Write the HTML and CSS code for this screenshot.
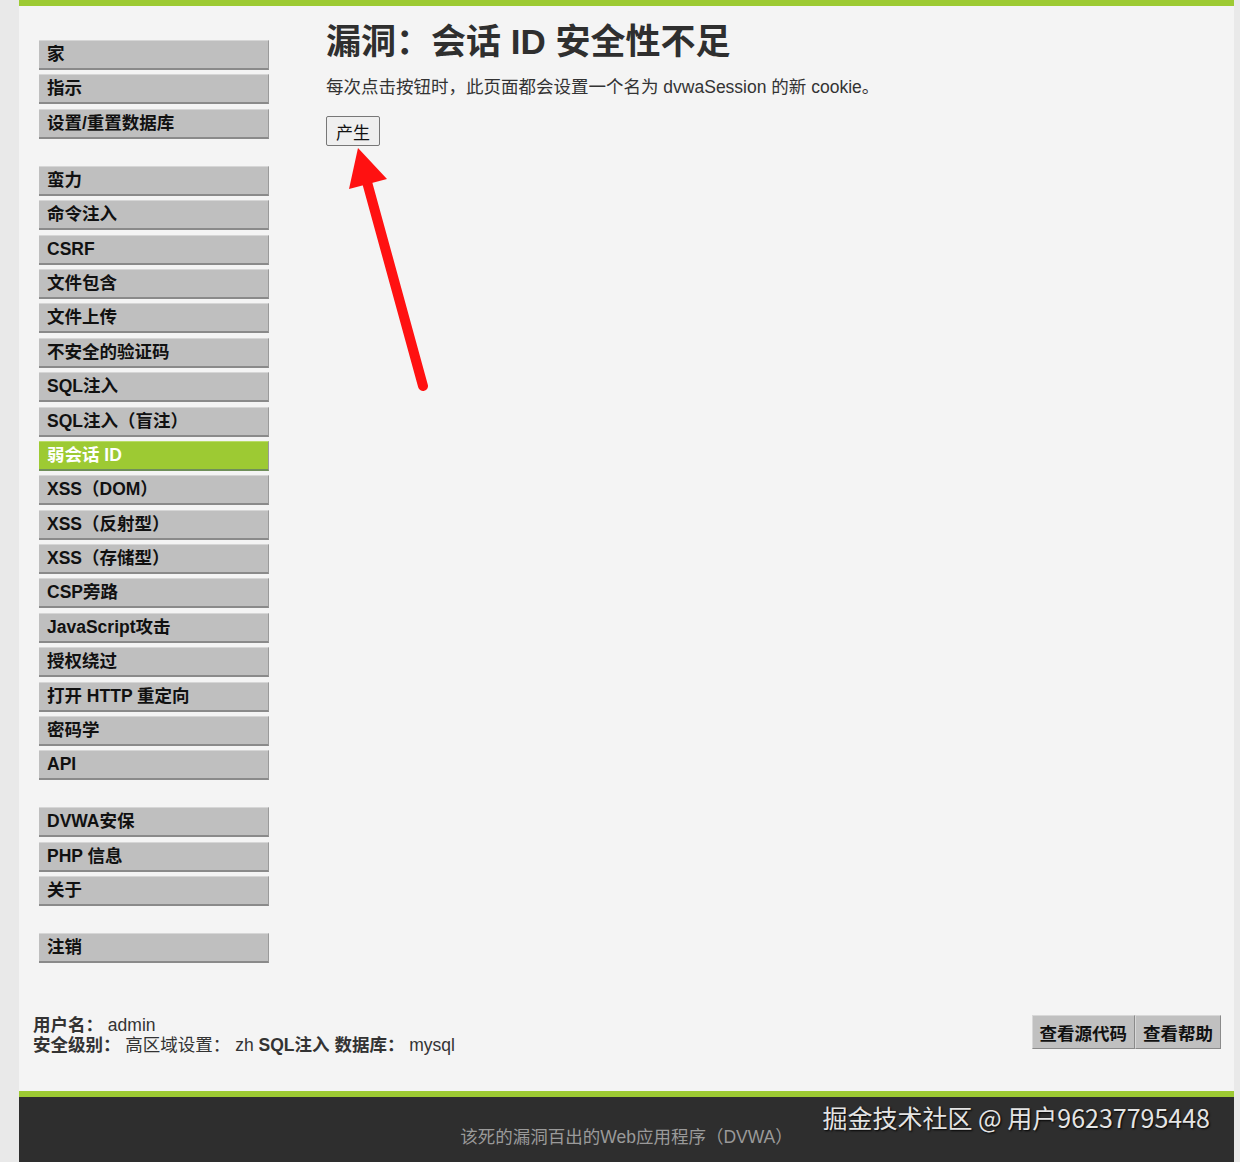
FILE: index.html
```html
<!DOCTYPE html>
<html lang="zh">
<head>
<meta charset="UTF-8">
<meta name="viewport" content="width=device-width, initial-scale=1.0">
<title>漏洞：会话 ID 安全性不足</title>
<link rel="stylesheet" href="styles.css">
</head>
<body>
<div id="container">
  <div id="header"></div>

  <div id="main_body">
    <div id="main_menu">
      <ul class="menuBlocks">
        <li><a href="#">家</a></li>
        <li><a href="#">指示</a></li>
        <li><a href="#">设置/重置数据库</a></li>
      </ul>
      <ul class="menuBlocks">
        <li><a href="#">蛮力</a></li>
        <li><a href="#">命令注入</a></li>
        <li><a href="#">CSRF</a></li>
        <li><a href="#">文件包含</a></li>
        <li><a href="#">文件上传</a></li>
        <li><a href="#">不安全的验证码</a></li>
        <li><a href="#">SQL注入</a></li>
        <li><a href="#">SQL注入（盲注）</a></li>
        <li class="selected"><a href="#">弱会话 ID</a></li>
        <li><a href="#">XSS（DOM）</a></li>
        <li><a href="#">XSS（反射型）</a></li>
        <li><a href="#">XSS（存储型）</a></li>
        <li><a href="#">CSP旁路</a></li>
        <li><a href="#">JavaScript攻击</a></li>
        <li><a href="#">授权绕过</a></li>
        <li><a href="#">打开 HTTP 重定向</a></li>
        <li><a href="#">密码学</a></li>
        <li><a href="#">API</a></li>
      </ul>
      <ul class="menuBlocks">
        <li><a href="#">DVWA安保</a></li>
        <li><a href="#">PHP 信息</a></li>
        <li><a href="#">关于</a></li>
      </ul>
      <ul class="menuBlocks">
        <li><a href="#">注销</a></li>
      </ul>
    </div>

    <div class="body_padded">
      <h1>漏洞：会话 ID 安全性不足</h1>
      <p>每次点击按钮时，此页面都会设置一个名为 dvwaSession 的新 cookie。</p>
      <form>
        <input type="button" class="generate" value="产生">
      </form>
      <!-- red annotation arrow drawn over the screenshot -->
      <svg class="arrow" width="120" height="260" viewBox="0 0 120 260">
        <line x1="93" y1="246" x2="37" y2="42" stroke="#ff1111" stroke-width="10" stroke-linecap="round"/>
        <polygon points="28,8 57,39 19,49" fill="#ff1111"/>
      </svg>
    </div>
  </div>

  <div id="system_info">
    <div class="info">
      <em>用户名：</em> admin<br>
      <em>安全级别：</em> 高区域设置： zh <em>SQL注入 数据库：</em> mysql
    </div>
    <div class="popups">
      <input type="button" class="popup_button" value="查看源代码"><input type="button" class="popup_button" value="查看帮助">
    </div>
  </div>

  <div id="footer">
    <p>该死的漏洞百出的Web应用程序（DVWA）</p>
    <span class="watermark">掘金技术社区 @ 用户96237795448</span>
  </div>
</div>
</body>
</html>
```

FILE: styles.css
```css
body {
  margin: 0;
  background-color: #e9e9e9;
  font-family: "Liberation Sans", Arial, "Noto Sans CJK SC", sans-serif;
  color: #2f2f2f;
}

#container {
  position: relative;
  width: 1215px;
  margin-left: 19px;
  background-color: #f4f4f4;
}

#header {
  height: 6px;
  background-color: #9dca33;
}

#main_body {
  display: flex;
  align-items: flex-start;
}

#main_menu {
  width: 230px;
  margin-left: 20px;
  padding-top: 34px;
  padding-bottom: 52px;
}

.menuBlocks {
  list-style: none;
  margin: 0 0 27px 0;
  padding: 0;
}

.menuBlocks:last-child {
  margin-bottom: 0;
}

.menuBlocks li {
  height: 30px;
  margin-bottom: 4.4px;
  box-sizing: border-box;
  background-color: #bfbfbf;
  border-top: 1px solid #d6d6d6;
  border-bottom: 2px solid #8a8a8a;
  border-right: 1px solid #9a9a9a;
}

.menuBlocks li:last-child {
  margin-bottom: 0;
}

.menuBlocks li a {
  display: block;
  padding-left: 8px;
  line-height: 27px;
  font-size: 17.5px;
  font-weight: bold;
  color: #111;
  text-decoration: none;
}

.menuBlocks li.selected {
  background-color: #9dca33;
  border-top-color: #b9dc66;
  border-bottom-color: #6f8f5a;
}

.menuBlocks li.selected a {
  color: #fff;
}

.body_padded {
  position: relative;
  margin-left: 57px;
  padding-top: 15px;
}

h1 {
  margin: 0;
  font-size: 35px;
  line-height: 42px;
  font-weight: bold;
  color: #2f2f2f;
}

.body_padded p {
  margin: 14px 0 0 0;
  font-size: 17.5px;
  line-height: 21px;
  color: #333;
}

.body_padded form {
  margin-top: 18px;
}

.generate {
  height: 30px;
  padding: 0 9px;
  font-family: "Liberation Sans", Arial, "Noto Sans CJK SC", sans-serif;
  font-size: 17px;
  color: #111;
  background-color: #efefef;
  border: 1px solid #777;
  border-radius: 2px;
}

.arrow {
  position: absolute;
  left: 4px;
  top: 134px;
}

#system_info {
  display: flex;
  justify-content: space-between;
  align-items: flex-start;
  padding: 0 13px 36px 14px;
}

.info {
  font-size: 17.5px;
  line-height: 20px;
  color: #333;
}

.info em {
  font-style: normal;
  font-weight: bold;
}

.popups {
  display: flex;
}

.popup_button {
  height: 34px;
  padding: 0 7px;
  margin: 0;
  font-family: "Liberation Sans", Arial, "Noto Sans CJK SC", sans-serif;
  font-size: 17.5px;
  font-weight: bold;
  color: #111;
  background-color: #c0c0c0;
  border: 1px solid;
  border-color: #d8d8d8 #8a8a8a #8a8a8a #d8d8d8;
  border-radius: 0;
}

#footer {
  position: relative;
  height: 66px;
  border-top: 6px solid #9dca33;
  background-color: #2e2e2e;
}

#footer p {
  margin: 0;
  padding-top: 29px;
  text-align: center;
  font-size: 17.5px;
  line-height: 22px;
  color: #9a9a9a;
}

.watermark {
  position: absolute;
  right: 24px;
  top: 2px;
  font-family: "Noto Sans CJK SC", sans-serif;
  font-size: 25px;
  color: #e4e4e4;
  text-shadow: 1px 1px 2px #000;
}
```
